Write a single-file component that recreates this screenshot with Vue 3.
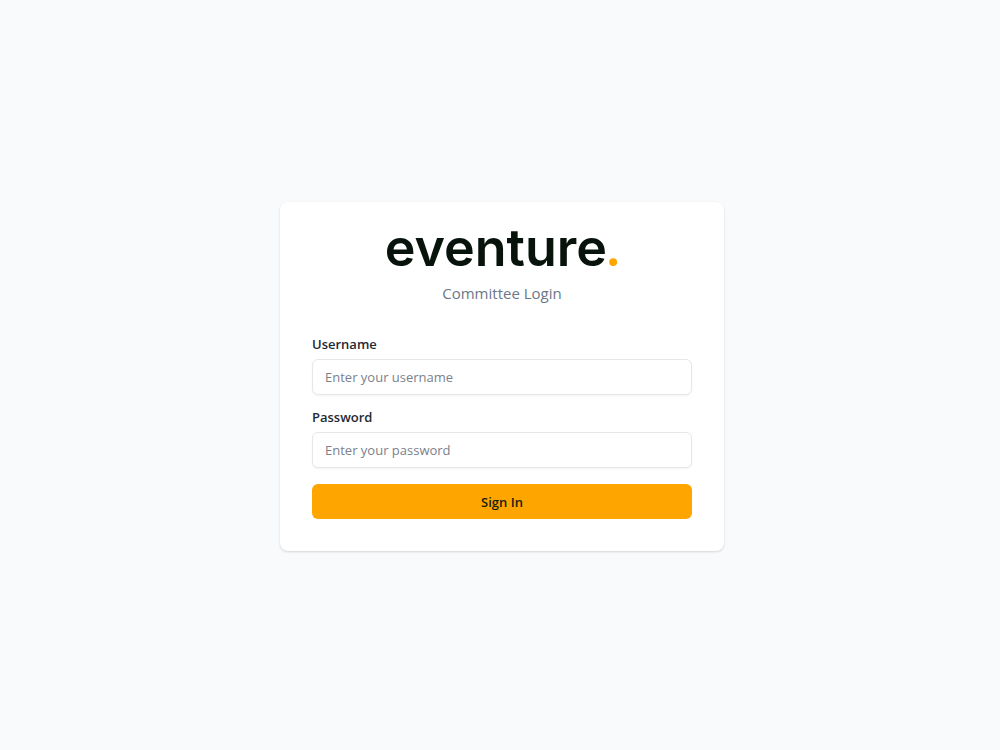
<script setup>
import { ref } from 'vue'

const username = ref('')
const password = ref('')
</script>

<template>
  <main class="page">
    <section class="card">
      <header class="header">
        <h1 class="logo">eventure<span class="dot">.</span></h1>
        <p class="subtitle">Committee Login</p>
      </header>
      <form class="form" @submit.prevent>
        <div class="field">
          <label for="username">Username</label>
          <input id="username" v-model="username" type="text" placeholder="Enter your username" />
        </div>
        <div class="field">
          <label for="password">Password</label>
          <input id="password" v-model="password" type="password" placeholder="Enter your password" />
        </div>
        <button type="submit">Sign In</button>
      </form>
    </section>
  </main>
</template>

<style>
body {
  margin: 0;
  background: #f8fafc;
}
</style>

<style scoped>
.page {
  box-sizing: border-box;
  min-height: 100vh;
  padding: 3px 0 0 4px;
  display: flex;
  align-items: center;
  justify-content: center;
  background: #f8fafc;
  font-family: "Open Sans", "Noto Sans", sans-serif;
}
.card {
  box-sizing: border-box;
  width: 100%;
  max-width: 444px;
  padding: 32px;
  border-radius: 8px;
  background: #fff;
  box-shadow: 0 1px 3px rgba(0, 0, 0, 0.1), 0 1px 2px rgba(0, 0, 0, 0.06);
}
.header {
  display: flex;
  flex-direction: column;
  align-items: center;
  margin-bottom: 32px;
}
.logo {
  margin: 0;
  color: #07130b;
  font-family: Inter, sans-serif;
  font-size: 52px;
  font-weight: 600;
  line-height: 27px;
  padding-bottom: 20px;
}
.dot {
  color: #ffa500;
  font-family: Lato, sans-serif;
  font-weight: 700;
  line-height: 0;
}
.subtitle {
  margin: 0;
  color: #6b7788;
  font-size: 15px;
  line-height: 24px;
}
.form {
  display: flex;
  flex-direction: column;
}
.field {
  display: flex;
  flex-direction: column;
  gap: 8px;
  margin-bottom: 15px;
}
.field:last-of-type {
  margin-bottom: 16px;
}
label {
  color: #1f2933;
  font-size: 13px;
  font-weight: 600;
  line-height: 14px;
}
input {
  box-sizing: border-box;
  width: 100%;
  height: 36px;
  padding: 0 12px;
  border: 1px solid #e5e7eb;
  border-radius: 6px;
  background: #fff;
  color: #1f2933;
  font-family: inherit;
  font-size: 13px;
  box-shadow: 0 1px 2px rgba(0, 0, 0, 0.05);
}
input::placeholder {
  color: #7b818b;
  opacity: 1;
}
button {
  height: 35px;
  padding: 0 16px;
  border: 0;
  border-radius: 6px;
  background: #ffa500;
  color: #1a1f14;
  font-family: inherit;
  font-size: 13px;
  font-weight: 600;
  cursor: pointer;
}
</style>
